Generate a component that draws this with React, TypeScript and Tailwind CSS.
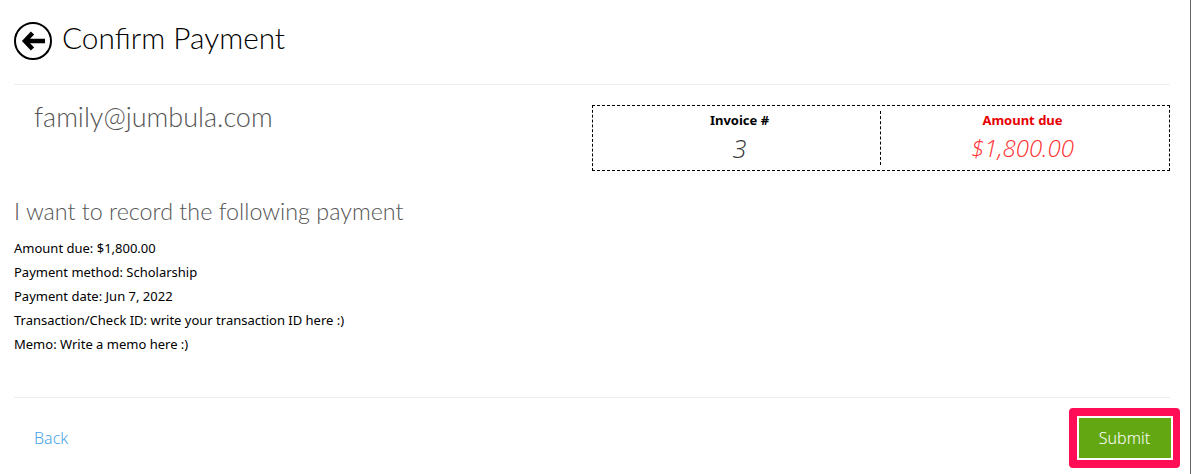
export default function App() {
  const body = { fontFamily: '"Noto Sans", sans-serif' };
  const display = { fontFamily: '"Lato", sans-serif' };
  const value = { fontFamily: '"Open Sans", sans-serif' };
  return (
    <div className="h-[474px] w-[1191px] overflow-hidden border-r border-[#666666] bg-white pl-[14px] pr-[20px] text-black" style={body}>
      <div className="flex h-[85px] items-center gap-[10px] border-b border-[#eeeeee] pb-[9px]">
        <svg width="38" height="38" viewBox="0 0 38 38" className="mt-[6px]">
          <circle cx="19" cy="19" r="18" fill="none" stroke="#000" strokeWidth="2" />
          <path d="M31 19 H13" fill="none" stroke="#000" strokeWidth="4.5" />
          <path d="M18.5 11 L11 19 L18.5 27" fill="none" stroke="#000" strokeWidth="4.5" />
        </svg>
        <div className="text-[29.8px] font-light leading-[38px]" style={display}>Confirm Payment</div>
      </div>

      <div className="flex h-[86px] items-start justify-between">
        <div className="ml-[20px] mt-[16px] text-[27px] font-light leading-[32px] text-[#555555]" style={display}>family@jumbula.com</div>
        <div className="mt-[20px] flex h-[66px] w-[578px] border border-dashed border-black">
          <div className="my-[5px] flex w-[288px] flex-col items-center border-r border-dashed border-black pl-[6px]">
            <div className="text-[13px] font-bold leading-[18px]">Invoice #</div>
            <div className="mt-[2px] text-[25px] font-light italic leading-[34px] text-[#333333]" style={value}>3</div>
          </div>
          <div className="my-[5px] flex flex-1 flex-col items-center pr-[5px]">
            <div className="text-[13px] font-bold leading-[18px] text-[#e60000]">Amount due</div>
            <div className="mt-[2px] text-[24px] font-light italic leading-[34px] text-[#ff3030]" style={value}>$1,800.00</div>
          </div>
        </div>
      </div>

      <div className="mt-[25px] text-[23.3px] font-light leading-[30px] text-[#555555]" style={display}>I want to record the following payment</div>
      <div className="mt-[10px] text-[13px] leading-[24px]">
        <div>Amount due: $1,800.00</div>
        <div>Payment method: Scholarship</div>
        <div>Payment date: Jun 7, 2022</div>
        <div>Transaction/Check ID: write your transaction ID here :)</div>
        <div>Memo: Write a memo here :)</div>
      </div>

      <div className="mt-[41px] flex h-[81px] items-center justify-between border-t border-[#eeeeee]">
        <a className="ml-[20px] text-[16px] font-light text-[#4aa3e8]">Back</a>
        <div className="-mr-[10px] flex h-[60px] w-[111px] items-center justify-center rounded-[4px] bg-[#ff0e57]">
          <button className="h-[44px] w-[96px] border-2 border-white bg-[#63a813] text-[16px] font-light text-white">Submit</button>
        </div>
      </div>
    </div>
  );
}
